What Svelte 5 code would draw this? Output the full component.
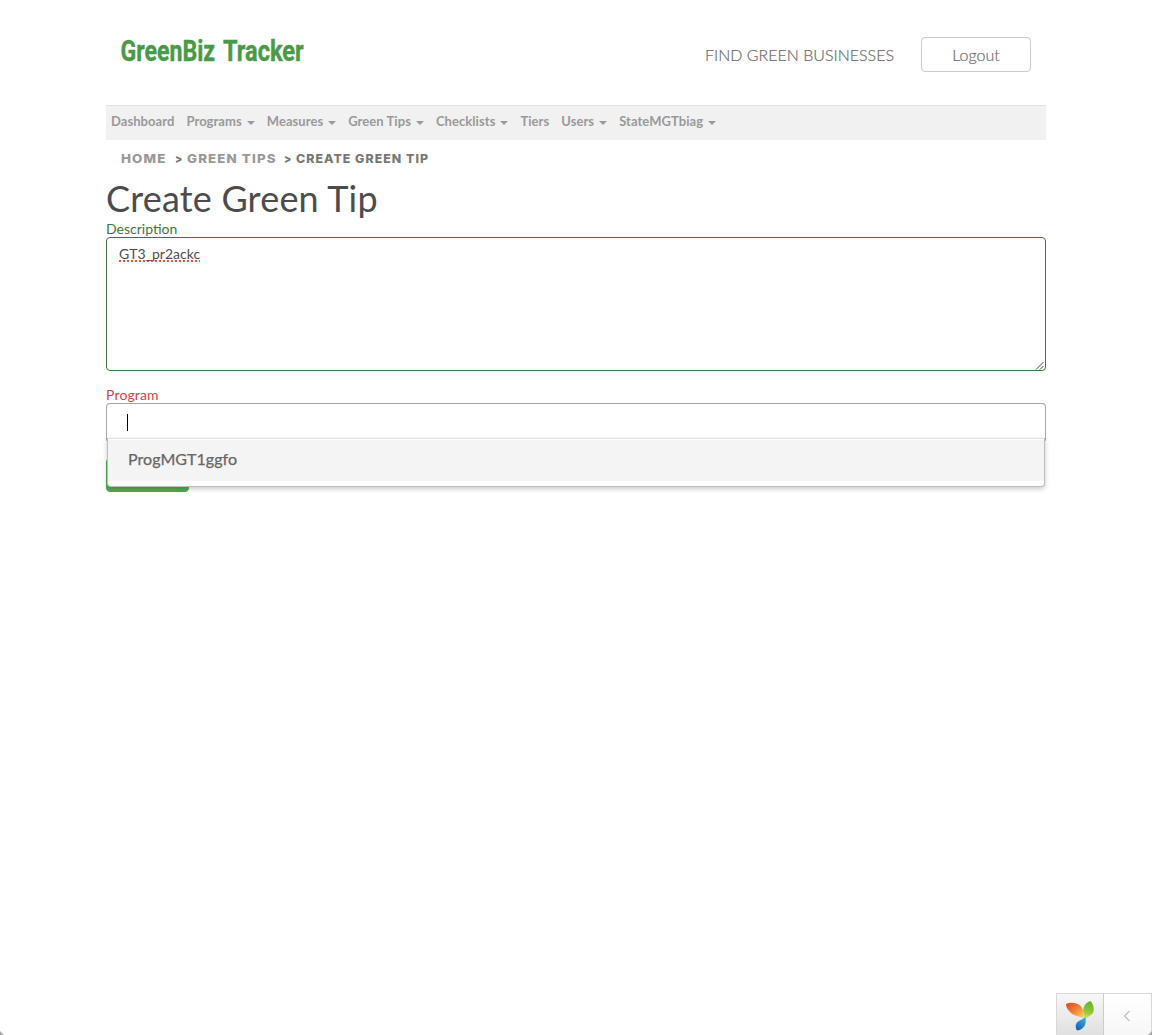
<script>
  const menu = [
    { label: 'Dashboard' },
    { label: 'Programs', sub: true },
    { label: 'Measures', sub: true },
    { label: 'Green Tips', sub: true },
    { label: 'Checklists', sub: true },
    { label: 'Tiers' },
    { label: 'Users', sub: true },
    { label: 'StateMGTbiag', sub: true }
  ];
  let description = $state('GT3_pr2ackc');
</script>

<div class="window">
  <div class="container">
    <header>
      <svg class="logo" width="200" height="34" viewBox="0 0 200 34" role="img" aria-label="GreenBiz Tracker">
        <text transform="translate(0.500 25.300) scale(0.797 1)">GreenBiz</text>
        <text transform="translate(103 25.300) scale(0.812 1)">Tracker</text>
      </svg>
      <div class="actions">
        <a class="find" href="#find">FIND GREEN BUSINESSES</a>
        <button class="logout">Logout</button>
      </div>
    </header>

    <nav>
      {#each menu as item}
        <a href="#menu">{item.label}{#if item.sub}<i class="caret"></i>{/if}</a>
      {/each}
    </nav>

    <div class="crumbs">
      <a class="home" href="#home">HOME</a><span class="sep">&gt;</span><a class="tips" href="#tips">GREEN TIPS</a><span class="sep">&gt;</span><span class="here">CREATE GREEN TIP</span>
    </div>

    <h1>Create Green Tip</h1>

    <div class="label ok">Description</div>
    <div class="area">
      <span class="misspelt">{description}</span>
      <svg class="grip" width="9" height="9" viewBox="0 0 9 9"><path d="M1 8.5L8.5 1M5 8.5L8.5 5" /></svg>
    </div>

    <div class="label bad">Program</div>
    <div class="select">
      <div class="control"><span class="cursor"></span></div>
      <div class="menu"><div class="option">ProgMGT1ggfo</div></div>
    </div>
    <button class="submit" aria-label="Create"></button>
  </div>

  <div class="debug">
    <div class="yii">
      <svg width="30" height="32" viewBox="0 0 30 32">
        <defs>
          <linearGradient id="orange" x1="0" y1="0" x2="1" y2="1">
            <stop offset="0" stop-color="#dc4428" /><stop offset="0.5" stop-color="#ee8138" /><stop offset="1" stop-color="#ffd75b" />
          </linearGradient>
          <linearGradient id="green" x1="0.5" y1="0" x2="0.3" y2="1">
            <stop offset="0" stop-color="#60b32c" /><stop offset="0.6" stop-color="#92c83c" /><stop offset="1" stop-color="#d9e75a" />
          </linearGradient>
          <linearGradient id="blue" x1="0.8" y1="0" x2="0.3" y2="1">
            <stop offset="0" stop-color="#43a9e3" /><stop offset="1" stop-color="#1563b5" />
          </linearGradient>
        </defs>
        <path fill="url(#orange)" d="M1 4C5 2 13 2 16.500 7C18.500 10 19 14 18.500 18C14 16.500 8 15.500 5 12C2.500 9.500 1 7 1 4Z" />
        <path fill="url(#green)" d="M25.500 1C28.500 4 30 10 27.500 13.500C25.500 16 22.500 17 19.500 19C19 15 17.500 11.500 18.500 8C19.500 4.500 22 2 25.500 1Z" />
        <path fill="url(#blue)" d="M20.500 17C21.500 23 20 29.500 12 30.500C10 27 10.500 24 12.500 22C14.500 20 18 19.500 20.500 17Z" />
      </svg>
    </div>
    <div class="toggle">
      <svg width="8" height="12" viewBox="0 0 8 12"><path d="M6.500 1L1.500 6L6.500 11" /></svg>
    </div>
  </div>
  <i class="corner left"></i>
  <i class="corner right"></i>
</div>

<style>
  :global(body) { background: #fff; }
  * { box-sizing: border-box; }
  .window {
    position: relative;
    height: 1035px;
    overflow: hidden;
    font-family: Lato, sans-serif;
    color: #4c4c4c;
    font-size: 14px;
  }
  a { text-decoration: none; color: inherit; }
  button { font-family: inherit; }
  .container { width: 940px; margin: 0 auto; }

  header {
    height: 105px;
    padding: 36px 15px 0 14px;
    display: flex;
    justify-content: space-between;
    align-items: flex-start;
  }
  .logo { overflow: visible; }
  .logo text {
    font: 700 29px Roboto, sans-serif;
    fill: #489a46;
    stroke: #489a46;
    stroke-width: 0.4;
  }
  .actions { display: flex; gap: 27px; padding-top: 1px; color: #777; }
  .find {
    font-size: 16px;
    line-height: 36px;
    font-weight: 300;
    white-space: nowrap;
    color: #666;
    -webkit-text-stroke: 0.2px #777;
  }
  .logout {
    width: 110px;
    height: 35px;
    padding: 0;
    border: 1px solid #ccc;
    border-radius: 4px;
    background: #fff;
    color: #666;
    font-size: 16px;
    font-weight: 300;
    line-height: 34px;
    -webkit-text-stroke: 0.2px #777;
  }

  nav {
    height: 35px;
    padding: 0 5px;
    display: flex;
    gap: 12px;
    background: #f1f1f1;
    border-top: 1px solid #e0e0e0;
    font-size: 13px;
    font-weight: 700;
    letter-spacing: 0.06px;
    line-height: 31px;
    color: #999;
    white-space: nowrap;
  }
  .caret {
    display: inline-block;
    margin-left: 5px;
    vertical-align: middle;
    border: 4px solid transparent;
    border-top-color: #999;
    border-bottom: 0;
  }

  .crumbs {
    height: 38px;
    padding-left: 15px;
    display: flex;
    font: 800 12px/38px Inter, sans-serif;
    letter-spacing: 1px;
    color: #777;
    white-space: nowrap;
  }
  .crumbs > * { transform-origin: left; }
  .crumbs a { color: #999; transform: scaleX(1.11); }
  .crumbs .sep { width: 12px; transform: scaleX(0.9); }
  .crumbs .here { transform: scaleX(1.03); }
  .home { width: 54px; }
  .tips { width: 97px; }

  h1 {
    margin: 0;
    height: 43px;
    font-size: 36px;
    font-weight: 400;
    letter-spacing: 0.2px;
    line-height: 41px;
  }
  .label { height: 16px; font-size: 14px; line-height: 16px; }
  .ok { color: #3c763d; }
  .bad { color: #d43f4c; margin-top: 16px; letter-spacing: 0.15px; }
  .area {
    position: relative;
    height: 134px;
    padding: 6px 12px;
    border: 1px solid #3c763d;
    border-radius: 4px;
    line-height: 20px;
  }
  .misspelt {
    text-decoration: underline dotted #f0503c 2px;
    text-underline-offset: 1px;
    text-decoration-skip-ink: none;
  }
  .grip { position: absolute; right: 1px; bottom: 0; fill: none; stroke: #444; stroke-width: 1; }

  .select { position: relative; height: 55px; }
  .control {
    height: 38px;
    padding: 10px 20px;
    border: 1px solid #aaa4a6;
    border-bottom-color: #ddd;
    border-radius: 4px 4px 0 0;
  }
  .cursor { display: block; width: 1px; height: 17px; background: #000; }
  .menu {
    position: absolute;
    left: 1px;
    right: 1px;
    top: 35px;
    height: 49px;
    padding: 1px 0 5px;
    background: #fff;
    border: 1px solid #c4bbbe;
    border-top-color: #e1e1e1;
    border-radius: 0 0 4px 4px;
    box-shadow: 0 2px 5px rgba(0, 0, 0, 0.22);
  }
  .option {
    height: 41px;
    padding-left: 20px;
    background: #f4f4f4;
    font-size: 16px;
    letter-spacing: 0.06px;
    line-height: 38px;
    color: #666;
    -webkit-text-stroke: 0.25px #666;
  }
  .submit {
    display: block;
    width: 83px;
    height: 34px;
    border: 1px solid #4cae4c;
    border-radius: 4px;
    background: #56ad56;
  }

  .debug {
    position: absolute;
    right: 0;
    bottom: 0;
    display: flex;
    width: 96px;
    height: 42px;
    border: 1px solid #d8d8d8;
    border-bottom: 0;
    background: linear-gradient(#f7f7f7, #e0e0e0);
  }
  .yii { width: 47px; padding: 6px 0 0 8px; border-right: 1px solid #ccc; }
  .toggle {
    flex: 1;
    display: flex;
    align-items: center;
    justify-content: center;
    padding: 3px 2px 0 0;
    background: linear-gradient(#fff, #f7f7f7);
  }
  .toggle path { fill: none; stroke: #999; stroke-width: 1; }
  .corner { position: absolute; bottom: 0; border: 2px solid transparent; border-bottom-color: #aaa; }
  .left { left: 0; border-left-color: #aaa; }
  .right { right: 0; border-right-color: #aaa; }
</style>
